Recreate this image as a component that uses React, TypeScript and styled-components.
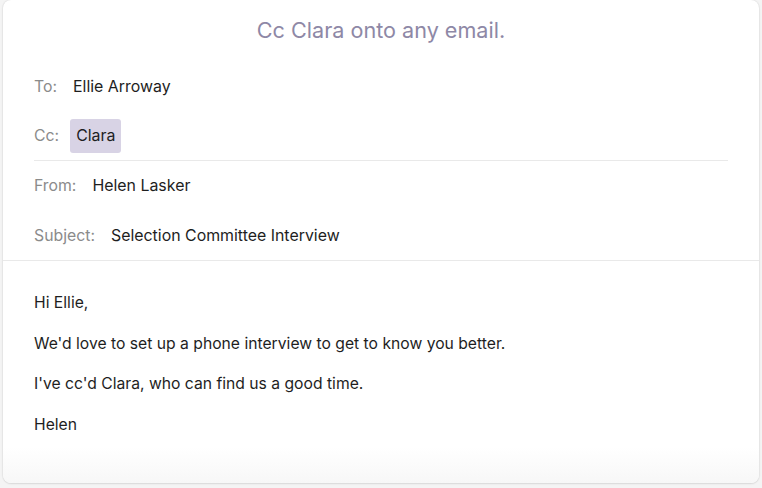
import React from "react";
import styled, { createGlobalStyle } from "styled-components";

const Global = createGlobalStyle`
  html, body { margin: 0; padding: 0; background: #f2f2f2; }
  body { font-family: Inter, "Noto Sans", sans-serif; -webkit-font-smoothing: antialiased; }
  * { box-sizing: border-box; }
`;

const Page = styled.div`
  width: 762px;
  height: 488px;
  padding: 0 3px;
  background: #f4f4f4;
`;

const Card = styled.div`
  height: 483px;
  background: #ffffff;
  border-radius: 8px;
  box-shadow: 0 0 2px rgba(0, 0, 0, 0.14), 0 1px 2px rgba(0, 0, 0, 0.08);
  display: flex;
  flex-direction: column;
  overflow: hidden;
`;

const Title = styled.h1`
  margin: 0;
  height: 62px;
  padding-bottom: 2px;
  display: flex;
  align-items: center;
  justify-content: center;
  font-size: 21.6px;
  font-weight: 400;
  color: #8e88a6;
`;

const Header = styled.div`
  padding: 0 31px;
  border-bottom: 1px solid #e9e9e9;
`;

const Row = styled.div<{ $divider?: boolean }>`
  height: 49.5px;
  display: flex;
  align-items: center;
  gap: 16px;
  border-bottom: ${(p) => (p.$divider ? "1px solid #e9e9e9" : "none")};
`;

const Label = styled.span`
  font-size: 15.8px;
  color: #8b8b8b;
`;

const Value = styled.span`
  font-size: 15.9px;
  color: #1e1e1e;
`;

const Chip = styled.span`
  font-size: 15.9px;
  color: #1e1e1e;
  background: #d8d3e5;
  border-radius: 3px;
  height: 34px;
  display: inline-flex;
  align-items: center;
  padding: 0 6px;
  margin-left: -5px;
`;

const Body = styled.div`
  flex: 1;
  padding: 30px 31px 0;
  background: linear-gradient(to bottom, #ffffff 0%, #ffffff 84%, #f7f7f7 100%);
`;

const Para = styled.p`
  margin: 0 0 16.67px;
  font-size: 15.7px;
  line-height: 24px;
  color: #1e1e1e;
`;

export default function App() {
  return (
    <>
      <Global />
      <Page>
        <Card>
          <Title>Cc Clara onto any email.</Title>
          <Header>
            <Row>
              <Label>To:</Label>
              <Value>Ellie Arroway</Value>
            </Row>
            <Row $divider>
              <Label>Cc:</Label>
              <Chip>Clara</Chip>
            </Row>
            <Row>
              <Label>From:</Label>
              <Value>Helen Lasker</Value>
            </Row>
            <Row>
              <Label>Subject:</Label>
              <Value>Selection Committee Interview</Value>
            </Row>
          </Header>
          <Body>
            <Para>Hi Ellie,</Para>
            <Para>We'd love to set up a phone interview to get to know you better.</Para>
            <Para>I've cc'd Clara, who can find us a good time.</Para>
            <Para>Helen</Para>
          </Body>
        </Card>
      </Page>
    </>
  );
}
